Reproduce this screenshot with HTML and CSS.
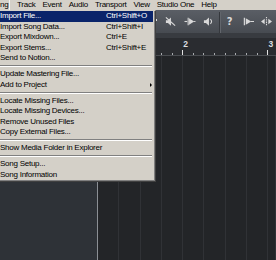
FILE: index.html
```html
<!DOCTYPE html>
<html lang="en">
<head>
    <meta charset="UTF-8">
    <meta name="viewport" content="width=device-width, initial-scale=1.0">
    <title>Song Menu</title>
    <link rel="stylesheet" href="styles.css">
</head>
<body>
    <div class="menubar">
        <span class="menu-title active">ng</span>
        <span class="menu-title">Track</span>
        <span class="menu-title">Event</span>
        <span class="menu-title">Audio</span>
        <span class="menu-title">Transport</span>
        <span class="menu-title">View</span>
        <span class="menu-title">Studio One</span>
        <span class="menu-title">Help</span>
    </div>

    <div class="toolbar">
        <span class="nub"></span>
        <div class="tool-group">
            <span class="tool">
                <svg viewBox="0 0 12 12" width="11" height="11">
                    <path d="M1 4.5h2.2L6.5 1.5v9L3.2 7.5H1z" fill="#d9d9d9"/>
                    <path d="M1 1.5L11 10.5" stroke="#d9d9d9" stroke-width="1.3"/>
                </svg>
            </span>
            <span class="tool">
                <svg viewBox="0 0 12 12" width="12" height="11">
                    <path d="M0 6h3" stroke="#d9d9d9" stroke-width="1.2"/>
                    <path d="M4 2v8" stroke="#d9d9d9" stroke-width="1.2"/>
                    <path d="M5 2.5L10.5 6 5 9.5z" fill="#d9d9d9"/>
                    <path d="M10 6h2" stroke="#d9d9d9" stroke-width="1"/>
                </svg>
            </span>
            <span class="tool">
                <svg viewBox="0 0 12 12" width="11" height="11">
                    <path d="M1 4.5h2.2L6.5 1.5v9L3.2 7.5H1z" fill="#d9d9d9"/>
                    <path d="M8 3.5a3 3 0 0 1 0 5" stroke="#d9d9d9" stroke-width="1.2" fill="none"/>
                </svg>
            </span>
        </div>
        <span class="divider"></span>
        <div class="tool-group right">
            <span class="tool help">?</span>
            <span class="tool">
                <svg viewBox="0 0 12 12" width="11" height="11">
                    <path d="M1.5 2v8" stroke="#d9d9d9" stroke-width="1.3"/>
                    <path d="M3 2.5L9 6 3 9.5z" fill="#d9d9d9"/>
                    <path d="M8.5 6H12" stroke="#d9d9d9" stroke-width="1.1"/>
                </svg>
            </span>
            <span class="tool">
                <svg viewBox="0 0 14 12" width="13" height="11">
                    <path d="M5 3L1 6l4 3z" fill="#d9d9d9"/>
                    <path d="M9 3l4 3-4 3z" fill="#d9d9d9"/>
                    <path d="M7 1v10" stroke="#d9d9d9" stroke-width="1.2" stroke-dasharray="1.5 1"/>
                </svg>
            </span>
        </div>
    </div>

    <div class="workspace">
        <div class="inspector"></div>
        <div class="arrange">
            <div class="ruler-band"></div>
            <div class="ruler">
                <div class="bar"><span class="bar-num">1</span></div>
                <div class="bar"><span class="bar-num">2</span></div>
                <div class="bar"><span class="bar-num">3</span></div>
            </div>
            <div class="tracks"></div>
        </div>
    </div>

    <div class="dropdown">
        <div class="item selected"><span class="label">Import File...</span><span class="key">Ctrl+Shift+O</span></div>
        <div class="item"><span class="label">Import Song Data...</span><span class="key">Ctrl+Shift+I</span></div>
        <div class="item"><span class="label">Export Mixdown...</span><span class="key">Ctrl+E</span></div>
        <div class="item"><span class="label">Export Stems...</span><span class="key">Ctrl+Shift+E</span></div>
        <div class="item"><span class="label">Send to Notion...</span></div>
        <div class="sep"></div>
        <div class="item"><span class="label">Update Mastering File...</span></div>
        <div class="item"><span class="label">Add to Project</span><span class="sub"></span></div>
        <div class="sep"></div>
        <div class="item"><span class="label">Locate Missing Files...</span></div>
        <div class="item"><span class="label">Locate Missing Devices...</span></div>
        <div class="item"><span class="label">Remove Unused Files</span></div>
        <div class="item"><span class="label">Copy External Files...</span></div>
        <div class="sep"></div>
        <div class="item"><span class="label">Show Media Folder in Explorer</span></div>
        <div class="sep"></div>
        <div class="item"><span class="label">Song Setup...</span></div>
        <div class="item"><span class="label">Song Information</span></div>
    </div>
</body>
</html>
```

FILE: styles.css
```css
body {
    margin: 0;
    width: 276px;
    height: 260px;
    overflow: hidden;
    position: relative;
    background: #222427;
    font-family: "Liberation Sans", Arial, sans-serif;
}
.menubar {
    display: flex;
    gap: 7px;
    height: 10px;
    background: #d4d0c8;
    font-size: 8px;
    letter-spacing: -0.25px;
    line-height: 10px;
    color: #000;
    white-space: nowrap;
}
.menubar .active {
    width: 9px;
    border-right: 1px solid #f4f4f4;
}
.toolbar {
    display: flex;
    align-items: center;
    height: 23px;
    padding-left: 155px;
    background: linear-gradient(#5a5e65, #474b51);
}
.nub {
    width: 7px;
    height: 2px;
    margin-top: -3px;
    background: linear-gradient(90deg, #e0e0e0 2px, transparent 2px);
}
.tool-group {
    display: flex;
}
.tool {
    width: 19px;
    height: 23px;
    display: flex;
    align-items: center;
    justify-content: center;
}
.right .tool {
    width: 18.5px;
}
.help {
    font-family: "DejaVu Sans", sans-serif;
    font-weight: bold;
    font-size: 10px;
    color: #d9d9d9;
}
.divider {
    width: 1px;
    height: 21px;
    margin-top: 2px;
    margin-left: 0.5px;
    background: #35383d;
    border-right: 1px solid #62666c;
}
.workspace {
    display: flex;
    height: 227px;
}
.inspector {
    flex: none;
    width: 97px;
    background: #2e3237;
    border-right: 1px solid #8b8f94;
}
.arrange {
    flex: 1;
    min-width: 0;
    overflow: hidden;
    display: flex;
    flex-direction: column;
}
.ruler-band {
    height: 5px;
    background: #383b40;
}
.ruler {
    display: flex;
    height: 17px;
    margin-left: -1px;
    background: #2a2c30;
    border-bottom: 1px solid #4a4d51;
}
.bar {
    flex: none;
    width: 85.2px;
    height: 17px;
    background-image:
        linear-gradient(90deg, #e2e2e2 1px, transparent 1px),
        repeating-linear-gradient(90deg, #a9acaf 0 1px, transparent 1px 10.65px);
    background-size: 100% 5px, 100% 2px;
    background-position: 0 12px, 0 15px;
    background-repeat: no-repeat;
}
.bar-num {
    display: block;
    padding: 2px 0 0 1px;
    font-size: 8.5px;
    line-height: 9px;
    font-weight: bold;
    color: #dcdee0;
}
.tracks {
    flex: 1;
    background-color: #232528;
    background-image: repeating-linear-gradient(90deg, #303236 0 1px, transparent 1px 21.3px);
    background-position: -1px 0;
}
.dropdown {
    position: absolute;
    top: 10px;
    left: 0;
    width: 154px;
    padding: 0 1px 1px 0;
    background: #d4d0c8;
    border-top: 1px solid #d4d0c8;
    border-right: 1px solid #404040;
    border-bottom: 1px solid #404040;
    box-shadow: inset -1px -1px 0 #808080;
    font-size: 8px;
    letter-spacing: -0.25px;
    color: #000;
}
.item {
    display: flex;
    align-items: center;
    height: 10.5px;
    line-height: 10.5px;
    margin-right: 1px;
    white-space: nowrap;
}
.item .label {
    width: 106px;
}
.selected {
    background: #0a246a;
    color: #fff;
}
.sub {
    margin-left: auto;
    margin-right: 1.5px;
    border-left: 2.5px solid #000;
    border-top: 2px solid transparent;
    border-bottom: 2px solid transparent;
}
.sep {
    height: 0;
    margin: 1.75px 2px 1.75px 0;
    border-top: 1px solid #808080;
    border-bottom: 1px solid #fff;
}
```
